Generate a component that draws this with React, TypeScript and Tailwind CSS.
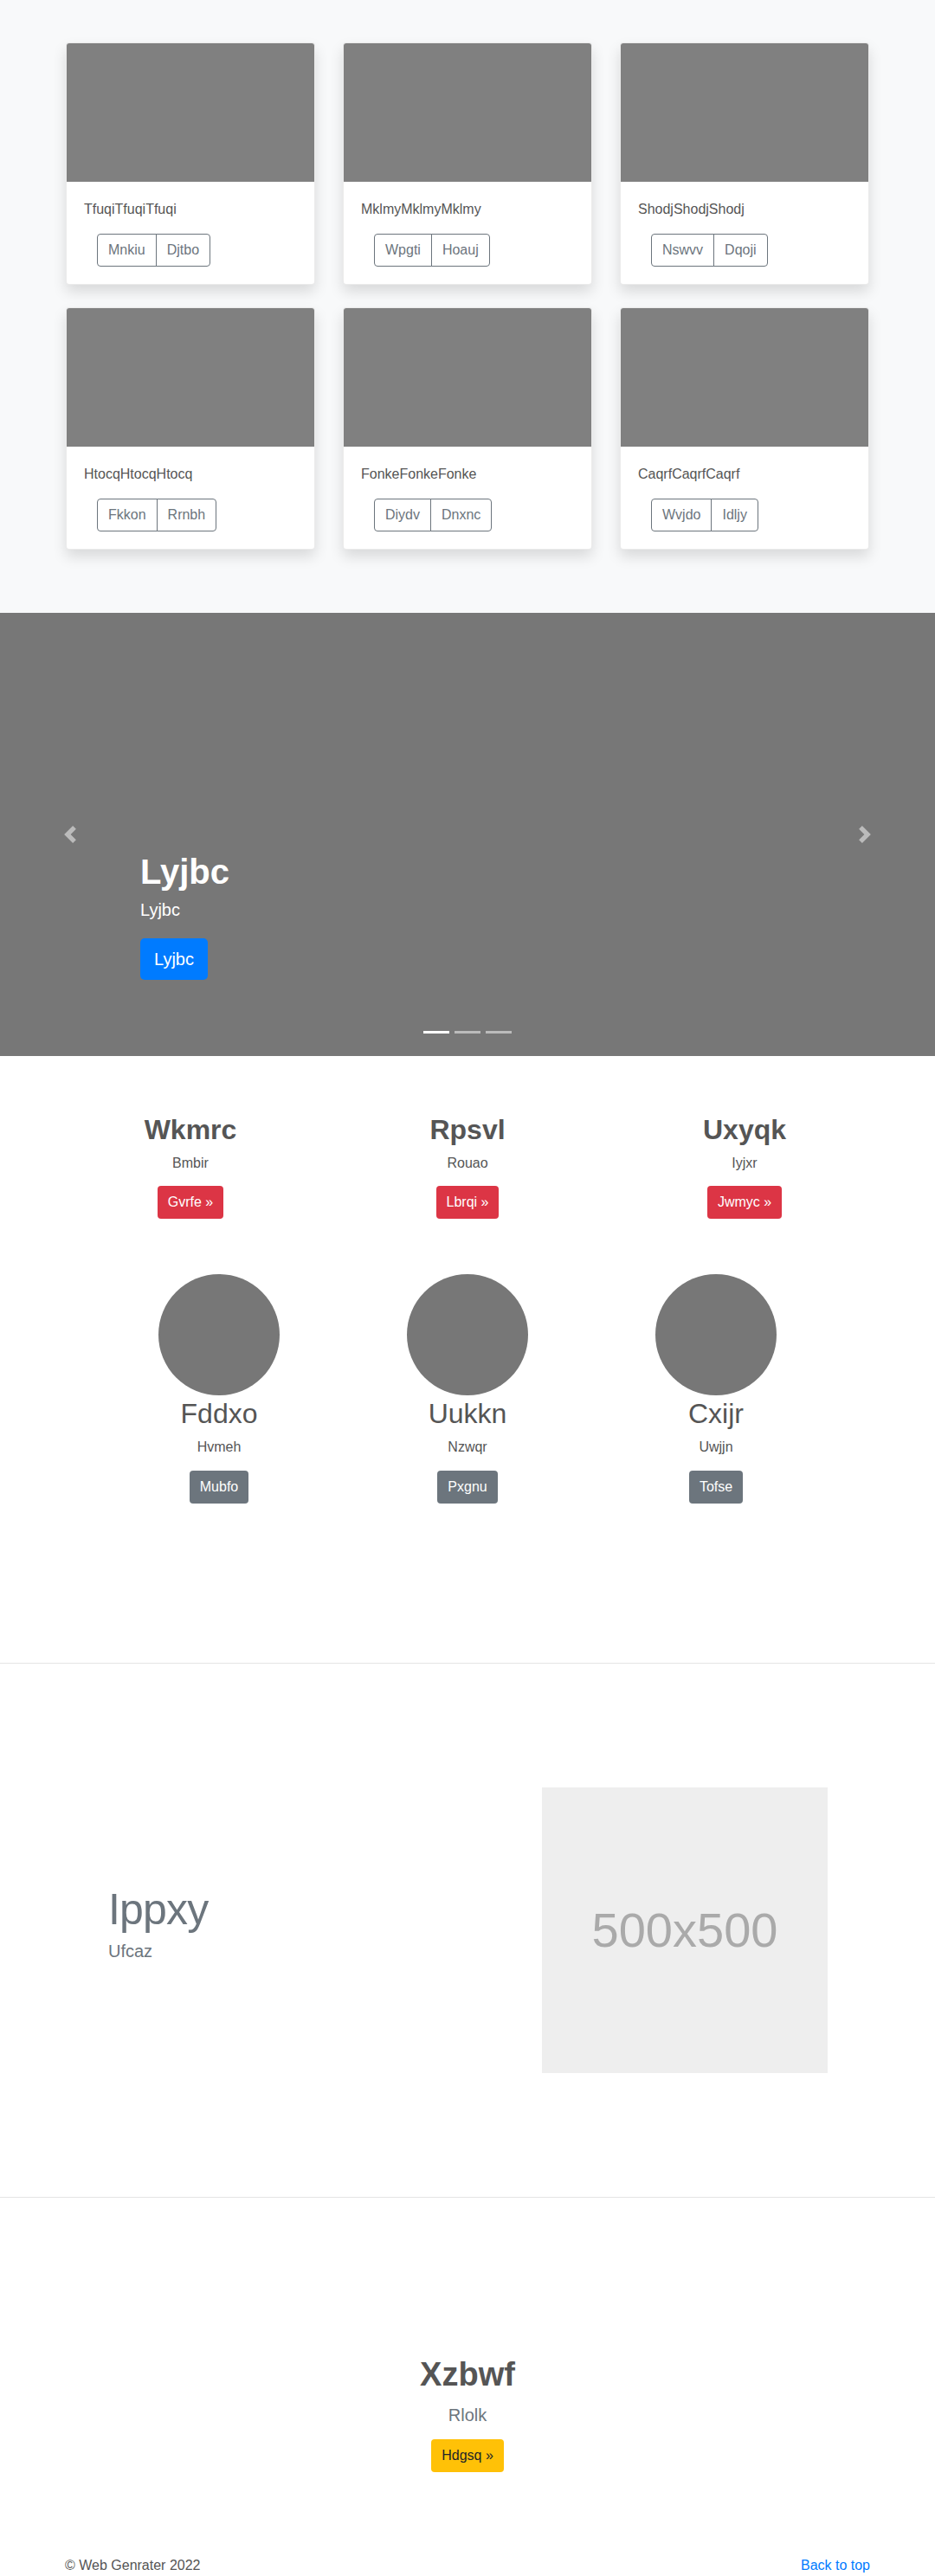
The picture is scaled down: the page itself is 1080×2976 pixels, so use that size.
const CARDS = [
  { text: 'TfuqiTfuqiTfuqi', btns: ['Mnkiu', 'Djtbo'] },
  { text: 'MklmyMklmyMklmy', btns: ['Wpgti', 'Hoauj'] },
  { text: 'ShodjShodjShodj', btns: ['Nswvv', 'Dqoji'] },
  { text: 'HtocqHtocqHtocq', btns: ['Fkkon', 'Rrnbh'] },
  { text: 'FonkeFonkeFonke', btns: ['Diydv', 'Dnxnc'] },
  { text: 'CaqrfCaqrfCaqrf', btns: ['Wvjdo', 'Idljy'] },
]

const MARKETING = [
  { title: 'Wkmrc', sub: 'Bmbir', btn: 'Gvrfe »' },
  { title: 'Rpsvl', sub: 'Rouao', btn: 'Lbrqi »' },
  { title: 'Uxyqk', sub: 'Iyjxr', btn: 'Jwmyc »' },
]

const PEOPLE = [
  { title: 'Fddxo', sub: 'Hvmeh', btn: 'Mubfo' },
  { title: 'Uukkn', sub: 'Nzwqr', btn: 'Pxgnu' },
  { title: 'Cxijr', sub: 'Uwjjn', btn: 'Tofse' },
]

function Card({ text, btns }: { text: string; btns: string[] }) {
  return (
    <div className="flex h-[280px] flex-col overflow-hidden rounded-[4px] border border-black/[0.08] bg-white shadow-[0_8px_16px_rgba(0,0,0,0.13)]">
      <div className="h-[162px] bg-[#808080]" />
      <div className="p-5">
        <p className="mb-4 text-[16px] leading-6 text-[#555]">{text}</p>
        <div className="ml-[15px] flex">
          <button
            type="button"
            className="h-[38px] rounded-l-[4px] border border-[#6c757d] px-3 text-[16px] text-[#6c757d]"
          >
            {btns[0]}
          </button>
          <button
            type="button"
            className="-ml-px h-[38px] rounded-r-[4px] border border-[#6c757d] px-3 text-[16px] text-[#6c757d]"
          >
            {btns[1]}
          </button>
        </div>
      </div>
    </div>
  )
}

export default function App() {
  return (
    <div className="min-h-[2976px] bg-white font-['Liberation_Sans',Arial,sans-serif] text-[#212529]">
      {/* album cards */}
      <section className="h-[708px] bg-[#f8f9fa] pt-[49px]">
        <div className="mx-auto grid w-[928px] grid-cols-3 gap-x-8 gap-y-[26px]">
          {CARDS.map((c) => (
            <Card key={c.text} text={c.text} btns={c.btns} />
          ))}
        </div>
      </section>

      {/* carousel */}
      <section className="relative h-[512px] bg-[#777777]">
        <div className="absolute inset-y-0 left-0 flex w-[15%] items-center justify-center">
          <svg width="20" height="20" viewBox="0 0 8 8" fill="#fff" opacity="0.5">
            <path d="M5.25 0l-4 4 4 4 1.5-1.5L4.25 4l2.5-2.5L5.25 0z" />
          </svg>
        </div>
        <div className="absolute inset-y-0 right-0 flex w-[15%] items-center justify-center">
          <svg width="20" height="20" viewBox="0 0 8 8" fill="#fff" opacity="0.5">
            <path d="M2.75 0l-1.5 1.5L3.75 4l-2.5 2.5L2.75 8l4-4-4-4z" />
          </svg>
        </div>
        <div className="pl-[162px] pt-[275px] text-white">
          <h1 className="text-[40px] font-semibold leading-[48px]">Lyjbc</h1>
          <p className="mt-[5px] text-[20px] leading-[30px]">Lyjbc</p>
          <button
            type="button"
            className="mt-[18px] h-[48px] rounded-[5px] bg-[#007bff] px-4 text-[20px] text-white"
          >
            Lyjbc
          </button>
        </div>
        <div className="absolute bottom-[26px] left-0 right-0 flex justify-center gap-[6px]">
          <span className="h-[3px] w-[30px] bg-white" />
          <span className="h-[3px] w-[30px] bg-white/50" />
          <span className="h-[3px] w-[30px] bg-white/50" />
        </div>
      </section>

      {/* marketing */}
      <section className="h-[701px] pt-[66px]">
        <div className="mx-auto grid w-[960px] grid-cols-3">
          {MARKETING.map((m) => (
            <div key={m.title} className="flex flex-col items-center text-center">
              <h2 className="mb-2 text-[32px] font-semibold leading-[38px] text-[#555]">{m.title}</h2>
              <p className="mb-[14px] text-[16px] leading-6 text-[#555]">{m.sub}</p>
              <button type="button" className="h-[38px] rounded-[4px] bg-[#dc3545] px-3 text-[16px] text-white">
                {m.btn}
              </button>
            </div>
          ))}
        </div>
        <div className="mx-auto mt-16 grid w-[861px] grid-cols-3">
          {PEOPLE.map((p) => (
            <div key={p.title} className="flex flex-col items-center text-center">
              <div className="h-[140px] w-[140px] rounded-full bg-[#777777]" />
              <h2 className="mb-2 mt-[2px] text-[32px] leading-[38px] text-[#555]">{p.title}</h2>
              <p className="mb-[15px] text-[16px] leading-6 text-[#555]">{p.sub}</p>
              <button type="button" className="h-[38px] rounded-[4px] bg-[#6c757d] px-3 text-[16px] text-white">
                {p.btn}
              </button>
            </div>
          ))}
        </div>
      </section>

      <hr className="border-t border-black/10" />

      {/* featurette */}
      <section className="flex h-[616px] pt-[143px]">
        <div className="ml-[125px] mt-[116px] w-[501px]">
          <h2 className="text-[50px] font-light leading-[50px] tracking-[-0.8px] text-[#6c757d]">Ippxy</h2>
          <p className="mt-2 text-[20px] font-light leading-[30px] text-[#6c757d]">Ufcaz</p>
        </div>
        <div className="flex h-[330px] w-[330px] items-center justify-center bg-[#eeeeee]">
          <span className="text-[56px] text-[#aaaaaa]">500x500</span>
        </div>
      </section>

      <hr className="border-t border-black/10" />

      {/* call to action */}
      <section className="flex flex-col items-center pt-[181px] text-center">
        <h2 className="text-[38px] font-semibold leading-[46px] text-[#555]">Xzbwf</h2>
        <p className="mt-[9px] text-[20px] font-light leading-[30px] text-[#6c757d]">Rlolk</p>
        <button
          type="button"
          className="mt-[13px] h-[38px] rounded-[4px] bg-[#ffc107] px-3 text-[16px] text-[#212529]"
        >
          Hdgsq »
        </button>
      </section>

      <footer className="mx-auto mt-[96px] flex w-[930px] justify-between pb-6 text-[16px] leading-6">
        <p className="text-[#555]">© Web Genrater 2022</p>
        <a href="#" className="text-[#007bff]">
          Back to top
        </a>
      </footer>
    </div>
  )
}
